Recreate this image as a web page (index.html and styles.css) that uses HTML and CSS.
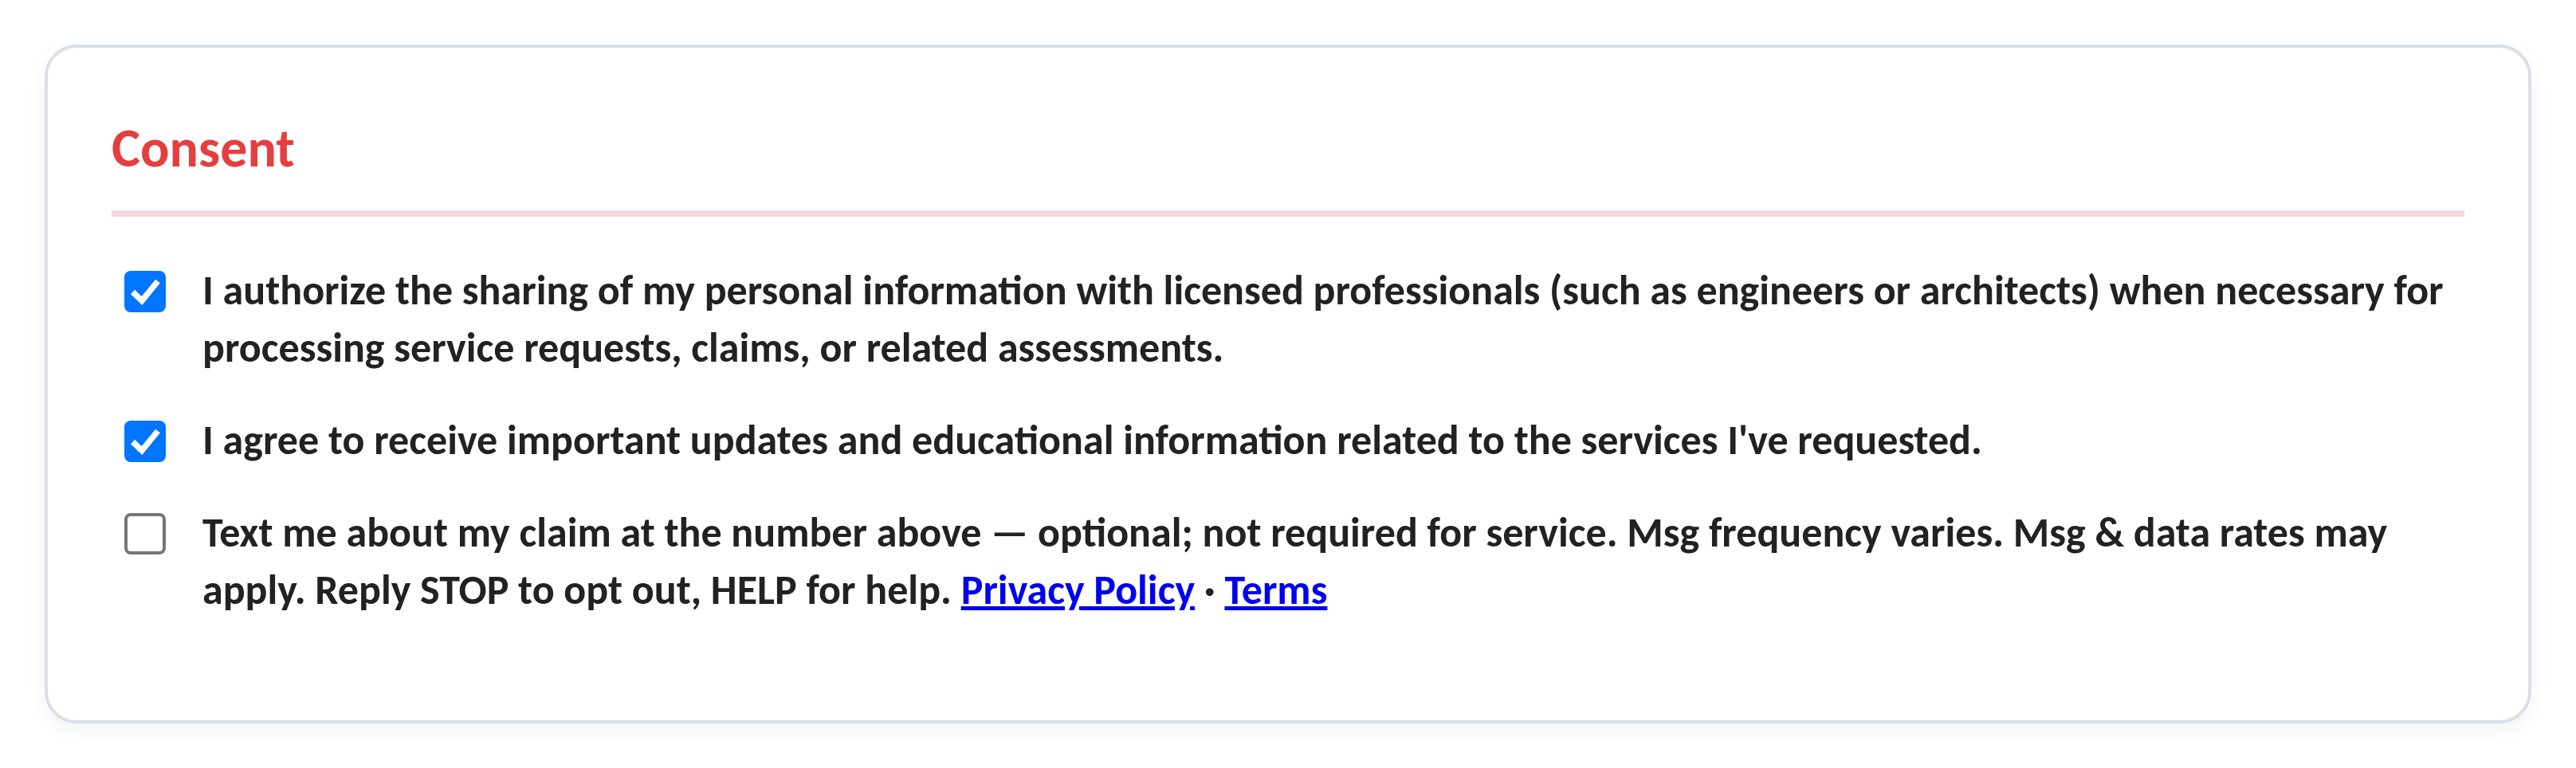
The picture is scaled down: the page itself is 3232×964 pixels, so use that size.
FILE: index.html
```html
<!DOCTYPE html>
<html lang="en">
<head>
    <meta charset="UTF-8">
    <meta name="viewport" content="width=device-width, initial-scale=1.0">
    <title>Consent</title>
    <link rel="stylesheet" href="styles.css">
</head>
<body>
    <section class="card">
        <h2 class="card-title">Consent</h2>

        <div class="consent-list">
            <label class="consent-item">
                <span class="box checked">
                    <svg viewBox="0 0 52 52"><path d="M10.5 26.5 L22 37.5 L42 13"/></svg>
                </span>
                <span class="consent-text">I authorize the sharing of my personal information with licensed professionals (such as engineers or architects) when necessary for processing service requests, claims, or related assessments.</span>
            </label>

            <label class="consent-item">
                <span class="box checked">
                    <svg viewBox="0 0 52 52"><path d="M10.5 26.5 L22 37.5 L42 13"/></svg>
                </span>
                <span class="consent-text">I agree to receive important updates and educational information related to the services I've requested.</span>
            </label>

            <label class="consent-item">
                <span class="box"></span>
                <span class="consent-text">Text me about my claim at the number above — optional; not required for service. Msg frequency varies. Msg &amp; data rates may apply. Reply STOP to opt out, HELP for help. <a href="#">Privacy Policy</a> · <a href="#">Terms</a></span>
            </label>
        </div>
    </section>
</body>
</html>
```

FILE: styles.css
```css
* {
    box-sizing: border-box;
}
body {
    margin: 0;
    padding: 56px;
    background: #fff;
    color: #222;
    font-family: Carlito, Calibri, Lato, sans-serif;
}
.card {
    background: #fff;
    border: 4px solid #dadfe8;
    border-radius: 40px;
    padding: 80px 80px 128px;
    box-shadow: 0 8px 24px rgba(15, 23, 42, 0.05);
}
.card-title {
    margin: 0;
    padding-bottom: 32px;
    border-bottom: 8px solid #f6d7da;
    color: #e53e3e;
    font-size: 68px;
    line-height: 92px;
    font-weight: 700;
}
.consent-list {
    margin-top: 56px;
    display: flex;
    flex-direction: column;
    gap: 44px;
}
.consent-item {
    display: flex;
    align-items: flex-start;
    font-size: 52px;
    line-height: 72px;
    font-weight: 700;
}
.box {
    flex: none;
    width: 52px;
    height: 52px;
    margin: 12px 46px 0 16px;
    border: 4px solid #767676;
    border-radius: 8px;
    background: #fff;
}
.box.checked {
    border: none;
    background: #0075ff;
}
.box svg {
    display: block;
    width: 52px;
    height: 52px;
}
.box svg path {
    fill: none;
    stroke: #fff;
    stroke-width: 7.5;
}
.consent-text a {
    color: #0000ee;
}
```
